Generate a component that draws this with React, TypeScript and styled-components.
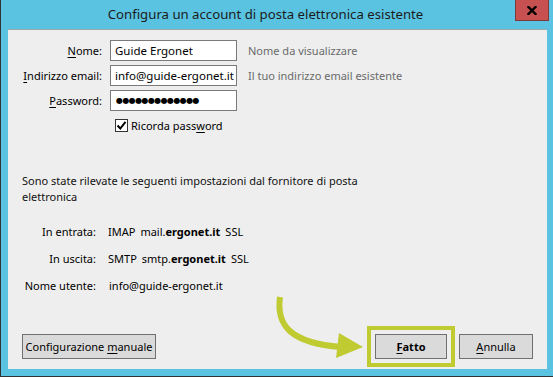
import React from "react";
import styled, { createGlobalStyle } from "styled-components";

const GlobalStyle = createGlobalStyle`
  html, body { margin: 0; padding: 0; background: #5ac3e2; }
  body { font-family: "Noto Sans", "Open Sans", sans-serif; font-size: 11px; color: #000; }
  * { box-sizing: border-box; }
`;

const Window = styled.div`
  width: 553px;
  height: 377px;
  display: flex;
  flex-direction: column;
  background: #5ac3e2;
  border-left: 1px solid #2f3336;
  border-bottom: 1px solid #2f3336;
  padding: 0 6px 7px 7px;
`;

const TitleBar = styled.div`
  height: 29px;
  display: flex;
  align-items: flex-start;
  margin-right: -2px;
`;

const Title = styled.div`
  flex: 1;
  text-align: center;
  font-size: 13.2px;
  line-height: 29px;
  color: #1b1b1b;
  padding-left: 8px;
`;

const CloseButton = styled.div`
  width: 34px;
  height: 21px;
  background: #c75050;
  border: 1px solid #7a3a3a;
  border-top: none;
  display: flex;
  align-items: center;
  justify-content: center;
`;

const Content = styled.div`
  position: relative;
  flex: 1;
  background: #eeeeee;
  border-top: 1px solid #9aa7ab;
  display: flex;
  flex-direction: column;
  padding: 10px 14px 2px 14px;
`;

const Form = styled.div`
  display: grid;
  grid-template-columns: 80px 127px 1fr;
  grid-auto-rows: 21px;
  column-gap: 8px;
  row-gap: 4px;
  align-items: center;
`;

const Label = styled.div`
  justify-self: end;
  white-space: nowrap;
  color: #000;
`;

const Field = styled.div`
  height: 21px;
  background: #fff;
  border: 1px solid #7a7a7a;
  padding: 0 4px;
  display: flex;
  align-items: center;
  white-space: nowrap;
  overflow: hidden;
  font-size: 11.5px;
`;

const Dots = styled.span`
  font-family: "DejaVu Sans", sans-serif;
  font-size: 8px;
  letter-spacing: -0.6px;
  padding-left: 1px;
`;

const Hint = styled.div`
  color: #6a6a6a;
  padding-left: 3px;
  white-space: nowrap;
`;

const CheckRow = styled.label`
  grid-column: 2 / 4;
  display: flex;
  align-items: center;
  gap: 3px;
  padding-left: 5px;
  height: 20px;
`;

const Box = styled.span`
  width: 13px;
  height: 13px;
  background: #fff;
  border: 1px solid #333;
  display: flex;
  align-items: center;
  justify-content: center;
`;

const Key = styled.span`
  text-decoration: underline;
  text-underline-offset: 2px;
`;

const Intro = styled.p`
  margin: 37px 0 0 0;
  line-height: 16px;
  width: 360px;
  color: #111;
`;

const ServerGrid = styled.div`
  margin-top: 17px;
  display: grid;
  grid-template-columns: 74px auto;
  column-gap: 12px;
  row-gap: 9px;
  grid-auto-rows: 18px;
  align-items: center;
  justify-content: start;
`;

const ServerLabel = styled.div`
  justify-self: end;
  white-space: nowrap;
`;

const ServerValue = styled.div<{ $shift?: number }>`
  display: flex;
  gap: 5px;
  white-space: nowrap;
  padding-left: ${(p) => p.$shift ?? 0}px;
  b { font-weight: 700; }
`;

const Footer = styled.div`
  margin-top: auto;
  display: flex;
  align-items: center;
`;

const Button = styled.div<{ $w: number; $bold?: boolean }>`
  width: ${(p) => p.$w}px;
  height: 25px;
  background: #dadada;
  border: 1px solid #707070;
  display: flex;
  align-items: center;
  justify-content: center;
  white-space: nowrap;
  font-size: 11px;
  font-weight: ${(p) => (p.$bold ? 700 : 400)};
  color: #000;
`;

const Spacer = styled.div`
  flex: 1;
`;

const Highlight = styled.div`
  border: 4px solid #bfcb31;
  padding: 4px;
  margin-right: 4px;
`;

const ArrowLayer = styled.svg`
  position: absolute;
  left: 0;
  top: 0;
  width: 100%;
  height: 100%;
  pointer-events: none;
`;

export default function App() {
  return (
    <>
      <GlobalStyle />
      <Window>
        <TitleBar>
          <Title>Configura un account di posta elettronica esistente</Title>
          <CloseButton>
            <svg width="10" height="9" viewBox="0 0 10 9">
              <path d="M1.5 1 L8.5 8 M8.5 1 L1.5 8" stroke="#000" strokeWidth="2.4" strokeLinecap="square" />
            </svg>
          </CloseButton>
        </TitleBar>
        <Content>
          <Form>
            <Label>
              <Key>N</Key>ome:
            </Label>
            <Field>Guide Ergonet</Field>
            <Hint>Nome da visualizzare</Hint>

            <Label>
              <Key>I</Key>ndirizzo email:
            </Label>
            <Field>info@guide-ergonet.it</Field>
            <Hint>Il tuo indirizzo email esistente</Hint>

            <Label>
              <Key>P</Key>assword:
            </Label>
            <Field>
              <Dots>●●●●●●●●●●●●●</Dots>
            </Field>
            <span />

            <span />
            <CheckRow>
              <Box>
                <svg width="11" height="11" viewBox="0 0 11 11">
                  <path d="M1.5 5.5 L4.3 8.5 L9.5 1.8" fill="none" stroke="#000" strokeWidth="2" />
                </svg>
              </Box>
              <span>
                Ricorda pass<Key>w</Key>ord
              </span>
            </CheckRow>
          </Form>

          <Intro>Sono state rilevate le seguenti impostazioni dal fornitore di posta elettronica</Intro>

          <ServerGrid>
            <ServerLabel>In entrata:</ServerLabel>
            <ServerValue>
              <span>IMAP</span>
              <span>
                mail.<b>ergonet.it</b>
              </span>
              <span>SSL</span>
            </ServerValue>
            <ServerLabel>In uscita:</ServerLabel>
            <ServerValue>
              <span>SMTP</span>
              <span>
                smtp.<b>ergonet.it</b>
              </span>
              <span>SSL</span>
            </ServerValue>
            <ServerLabel>Nome utente:</ServerLabel>
            <ServerValue $shift={1}>
              <span>info@guide-ergonet.it</span>
            </ServerValue>
          </ServerGrid>

          <Footer>
            <Button $w={134}>
              Configurazione&nbsp;<Key>m</Key>anuale
            </Button>
            <Spacer />
            <Highlight>
              <Button $w={72} $bold>
                <Key>F</Key>atto
              </Button>
            </Highlight>
            <Button $w={74}>
              <Key>A</Key>nnulla
            </Button>
          </Footer>

          <ArrowLayer viewBox="0 0 539 339">
            <path d="M272 267 C268 296, 283 313, 333 317" fill="none" stroke="#bfcb31" strokeWidth="6" />
            <polygon points="331,303 328,328 355,317" fill="#bfcb31" />
          </ArrowLayer>
        </Content>
      </Window>
    </>
  );
}
